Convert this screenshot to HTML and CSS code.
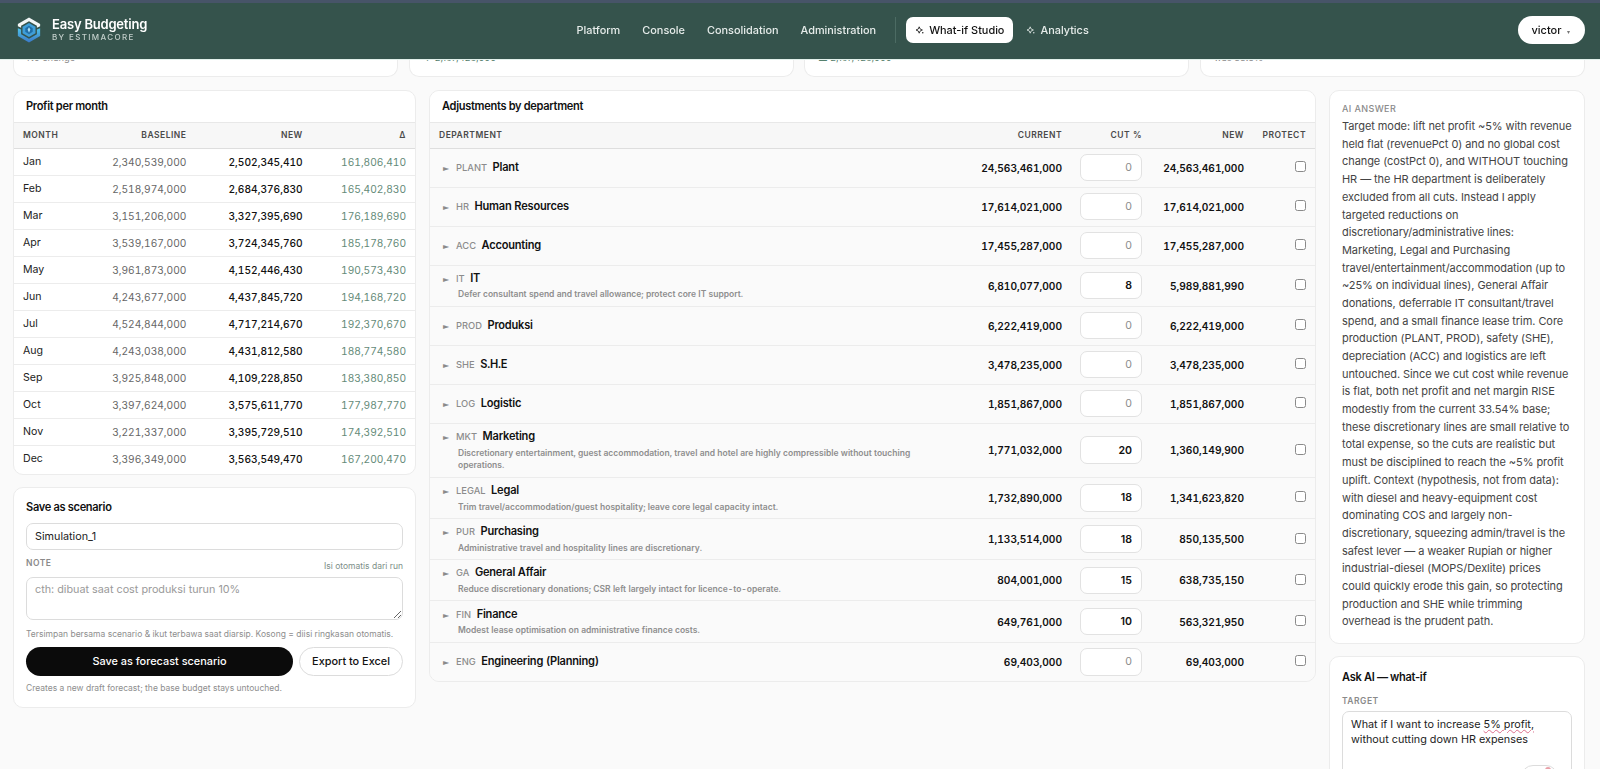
FILE: index.html
```html
<!DOCTYPE html>
<html lang="en">

<head>
    <meta charset="UTF-8">
    <title>Easy Budgeting - What-if Studio</title>
    <link rel="stylesheet" href="styles.css">
</head>

<body>
    <header class="topbar">
        <div class="brand">
            <svg class="brand-logo" width="26" height="26" viewBox="0 0 28 28">
                <defs>
                    <linearGradient id="logoBlue" x1="0" y1="0" x2="0" y2="1">
                        <stop offset="0" stop-color="#4fc3e8" />
                        <stop offset="1" stop-color="#3a78c8" />
                    </linearGradient>
                </defs>
                <path d="M14 0.500 26 7.500V10L22.500 11.500V9.500L14 4.500 5.500 9.500V11.500L2 10V7.500Z" fill="#f2f6f6" />
                <path d="M2 12 5.500 13.500V18.500L14 23.500 22.500 18.500V13.500L26 12V20.500L14 27.500 2 20.500Z" fill="url(#logoBlue)" />
                <path d="M14 6.500 21 10.500V17.500L14 21.500 7 17.500V10.500Z" fill="#3f9ed8" />
                <path d="M14 9.500 18 12V16L14 18.500 10 16V12Z" fill="#1f6ea8" />
                <path d="M14 11 15.500 13.500 14 17 12.500 13.500Z" fill="#a9dcf2" />
            </svg>
            <div>
                <div class="brand-name">Easy Budgeting</div>
                <div class="brand-sub">BY ESTIMACORE</div>
            </div>
        </div>
        <nav class="nav">
            <a class="nav-link">Platform</a>
            <a class="nav-link">Console</a>
            <a class="nav-link">Consolidation</a>
            <a class="nav-link">Administration</a>
            <span class="nav-sep"></span>
            <a class="nav-link nav-active">
                <svg class="spark" width="8" height="8" viewBox="0 0 10 10"><path d="M4 1 5.200 3.800 8 5 5.200 6.200 4 9 2.800 6.200 0 5 2.800 3.800Z" fill="none" stroke="currentColor" stroke-width="1" /><circle cx="8.500" cy="8.500" r="0.900" fill="currentColor" /></svg>What-if Studio
            </a>
            <a class="nav-link nav-ai">
                <svg class="spark" width="8" height="8" viewBox="0 0 10 10"><path d="M4 1 5.200 3.800 8 5 5.200 6.200 4 9 2.800 6.200 0 5 2.800 3.800Z" fill="none" stroke="currentColor" stroke-width="1" /><circle cx="8.500" cy="8.500" r="0.900" fill="currentColor" /></svg>Analytics
            </a>
        </nav>
        <button class="user-btn">victor <span class="user-caret">▾</span></button>
    </header>

    <main class="page">
        <section class="kpi-row">
            <div class="kpi-card"><span class="kpi-foot">No change</span></div>
            <div class="kpi-card"><span class="kpi-foot kpi-green">▼ 2,167,428,000</span></div>
            <div class="kpi-card"><span class="kpi-foot kpi-green">▲ 2,167,428,000</span></div>
            <div class="kpi-card"><span class="kpi-foot">was 33.5%</span></div>
        </section>

        <section class="studio">
            <div class="col">
                <div class="panel month-panel">
                    <div class="panel-title">Profit per month</div>
                    <table class="grid month-grid">
                        <thead>
                            <tr><th class="left">Month</th><th>Baseline</th><th>New</th><th>Δ</th></tr>
                        </thead>
                        <tbody>
                            <tr><td class="left">Jan</td><td class="muted">2,340,539,000</td><td class="strong">2,502,345,410</td><td class="delta">161,806,410</td></tr>
                            <tr><td class="left">Feb</td><td class="muted">2,518,974,000</td><td class="strong">2,684,376,830</td><td class="delta">165,402,830</td></tr>
                            <tr><td class="left">Mar</td><td class="muted">3,151,206,000</td><td class="strong">3,327,395,690</td><td class="delta">176,189,690</td></tr>
                            <tr><td class="left">Apr</td><td class="muted">3,539,167,000</td><td class="strong">3,724,345,760</td><td class="delta">185,178,760</td></tr>
                            <tr><td class="left">May</td><td class="muted">3,961,873,000</td><td class="strong">4,152,446,430</td><td class="delta">190,573,430</td></tr>
                            <tr><td class="left">Jun</td><td class="muted">4,243,677,000</td><td class="strong">4,437,845,720</td><td class="delta">194,168,720</td></tr>
                            <tr><td class="left">Jul</td><td class="muted">4,524,844,000</td><td class="strong">4,717,214,670</td><td class="delta">192,370,670</td></tr>
                            <tr><td class="left">Aug</td><td class="muted">4,243,038,000</td><td class="strong">4,431,812,580</td><td class="delta">188,774,580</td></tr>
                            <tr><td class="left">Sep</td><td class="muted">3,925,848,000</td><td class="strong">4,109,228,850</td><td class="delta">183,380,850</td></tr>
                            <tr><td class="left">Oct</td><td class="muted">3,397,624,000</td><td class="strong">3,575,611,770</td><td class="delta">177,987,770</td></tr>
                            <tr><td class="left">Nov</td><td class="muted">3,221,337,000</td><td class="strong">3,395,729,510</td><td class="delta">174,392,510</td></tr>
                            <tr><td class="left">Dec</td><td class="muted">3,396,349,000</td><td class="strong">3,563,549,470</td><td class="delta">167,200,470</td></tr>
                        </tbody>
                    </table>
                </div>

                <div class="panel save-card">
                    <div class="card-title">Save as scenario</div>
                    <input type="text" class="form-input" value="Simulation_1">
                    <div class="note-row">
                        <span class="field-label">Note</span>
                        <span class="note-auto">Isi otomatis dari run</span>
                    </div>
                    <textarea class="form-area" placeholder="cth: dibuat saat cost produksi turun 10%"></textarea>
                    <div class="help help-first">Tersimpan bersama scenario &amp; ikut terbawa saat diarsip. Kosong = diisi ringkasan otomatis.</div>
                    <div class="save-actions">
                        <button class="btn-dark">Save as forecast scenario</button>
                        <button class="btn-light">Export to Excel</button>
                    </div>
                    <div class="help">Creates a new draft forecast; the base budget stays untouched.</div>
                </div>
            </div>

            <div class="panel dept-panel">
                <div class="panel-title">Adjustments by department</div>
                <table class="grid dept-grid">
                    <thead>
                        <tr><th class="left">Department</th><th>Current</th><th>Cut %</th><th>New</th><th>Protect</th></tr>
                    </thead>
                    <tbody>
                        <tr>
                            <td class="left"><span class="tri">►</span><span class="code">PLANT</span><span class="dname">Plant</span></td>
                            <td class="num">24,563,461,000</td><td><input class="cut" value="0"></td><td class="num">24,563,461,000</td><td><input type="checkbox" class="chk"></td>
                        </tr>
                        <tr>
                            <td class="left"><span class="tri">►</span><span class="code">HR</span><span class="dname">Human Resources</span></td>
                            <td class="num">17,614,021,000</td><td><input class="cut" value="0"></td><td class="num">17,614,021,000</td><td><input type="checkbox" class="chk"></td>
                        </tr>
                        <tr>
                            <td class="left"><span class="tri">►</span><span class="code">ACC</span><span class="dname">Accounting</span></td>
                            <td class="num">17,455,287,000</td><td><input class="cut" value="0"></td><td class="num">17,455,287,000</td><td><input type="checkbox" class="chk"></td>
                        </tr>
                        <tr>
                            <td class="left with-reason"><span class="tri">►</span><span class="code">IT</span><span class="dname">IT</span><div class="reason">Defer consultant spend and travel allowance; protect core IT support.</div></td>
                            <td class="num">6,810,077,000</td><td><input class="cut cut-set" value="8"></td><td class="num">5,989,881,990</td><td><input type="checkbox" class="chk"></td>
                        </tr>
                        <tr>
                            <td class="left"><span class="tri">►</span><span class="code">PROD</span><span class="dname">Produksi</span></td>
                            <td class="num">6,222,419,000</td><td><input class="cut" value="0"></td><td class="num">6,222,419,000</td><td><input type="checkbox" class="chk"></td>
                        </tr>
                        <tr>
                            <td class="left"><span class="tri">►</span><span class="code">SHE</span><span class="dname">S.H.E</span></td>
                            <td class="num">3,478,235,000</td><td><input class="cut" value="0"></td><td class="num">3,478,235,000</td><td><input type="checkbox" class="chk"></td>
                        </tr>
                        <tr>
                            <td class="left"><span class="tri">►</span><span class="code">LOG</span><span class="dname">Logistic</span></td>
                            <td class="num">1,851,867,000</td><td><input class="cut" value="0"></td><td class="num">1,851,867,000</td><td><input type="checkbox" class="chk"></td>
                        </tr>
                        <tr>
                            <td class="left with-reason"><span class="tri">►</span><span class="code">MKT</span><span class="dname">Marketing</span><div class="reason">Discretionary entertainment, guest accommodation, travel and hotel are highly compressible without touching operations.</div></td>
                            <td class="num">1,771,032,000</td><td><input class="cut cut-set" value="20"></td><td class="num">1,360,149,900</td><td><input type="checkbox" class="chk"></td>
                        </tr>
                        <tr>
                            <td class="left with-reason"><span class="tri">►</span><span class="code">LEGAL</span><span class="dname">Legal</span><div class="reason">Trim travel/accommodation/guest hospitality; leave core legal capacity intact.</div></td>
                            <td class="num">1,732,890,000</td><td><input class="cut cut-set" value="18"></td><td class="num">1,341,623,820</td><td><input type="checkbox" class="chk"></td>
                        </tr>
                        <tr>
                            <td class="left with-reason"><span class="tri">►</span><span class="code">PUR</span><span class="dname">Purchasing</span><div class="reason">Administrative travel and hospitality lines are discretionary.</div></td>
                            <td class="num">1,133,514,000</td><td><input class="cut cut-set" value="18"></td><td class="num">850,135,500</td><td><input type="checkbox" class="chk"></td>
                        </tr>
                        <tr>
                            <td class="left with-reason"><span class="tri">►</span><span class="code">GA</span><span class="dname">General Affair</span><div class="reason">Reduce discretionary donations; CSR left largely intact for licence-to-operate.</div></td>
                            <td class="num">804,001,000</td><td><input class="cut cut-set" value="15"></td><td class="num">638,735,150</td><td><input type="checkbox" class="chk"></td>
                        </tr>
                        <tr>
                            <td class="left with-reason"><span class="tri">►</span><span class="code">FIN</span><span class="dname">Finance</span><div class="reason">Modest lease optimisation on administrative finance costs.</div></td>
                            <td class="num">649,761,000</td><td><input class="cut cut-set" value="10"></td><td class="num">563,321,950</td><td><input type="checkbox" class="chk"></td>
                        </tr>
                        <tr>
                            <td class="left"><span class="tri">►</span><span class="code">ENG</span><span class="dname">Engineering (Planning)</span></td>
                            <td class="num">69,403,000</td><td><input class="cut" value="0"></td><td class="num">69,403,000</td><td><input type="checkbox" class="chk"></td>
                        </tr>
                    </tbody>
                </table>
            </div>

            <div class="col">
                <div class="panel answer-card">
                    <div class="answer-label">AI ANSWER</div>
                    <p class="answer-text">Target mode: lift net profit ~5% with revenue held flat (revenuePct 0) and no global cost change (costPct 0), and WITHOUT touching HR — the HR department is deliberately excluded from all cuts. Instead I apply targeted reductions on discretionary/administrative lines:<br>Marketing, Legal and Purchasing travel/entertainment/accommodation (up to ~25% on individual lines), General Affair donations, deferrable IT consultant/travel spend, and a small finance lease trim. Core production (PLANT, PROD), safety (SHE), depreciation (ACC) and logistics are left untouched. Since we cut cost while revenue is flat, both net profit and net margin RISE modestly from the current 33.54% base; these discretionary lines are small relative to total expense, so the cuts are realistic but must be disciplined to reach the ~5% profit uplift. Context (hypothesis, not from data): with diesel and heavy-equipment cost dominating COS and largely non-discretionary, squeezing admin/travel is the safest lever — a weaker Rupiah or higher industrial-diesel (MOPS/Dexlite) prices<br>could quickly erode this gain, so protecting production and SHE while trimming overhead is the prudent path.</p>
                </div>
                <div class="panel ask-card">
                    <div class="card-title">Ask AI — what-if</div>
                    <div class="field-label">Target</div>
                    <div class="ask-box">
                        What if I want to increase <span class="spell">5% profit,</span> without cutting down HR expenses
                        <span class="ask-send"><span class="ask-dot"></span></span>
                    </div>
                </div>
            </div>
        </section>
    </main>
</body>

</html>
```

FILE: styles.css
```css
* {
    box-sizing: border-box;
}

html,
body {
    height: 769px;
    margin: 0;
    overflow: hidden;
}

body {
    background-color: #fafafa;
    color: #111;
    font-family: Inter, "Liberation Sans", sans-serif;
    font-size: 11px;
}

/* top bar sits over the scrolled page */
.topbar {
    position: fixed;
    top: 0;
    left: 0;
    right: 0;
    z-index: 10;
    height: 59px;
    display: flex;
    align-items: center;
    padding: 0 15.500px 1.500px 16px;
    background-color: #35534c;
    border-top: 3px solid #475468;
    box-shadow: 0 1px 0 #e2f0eb;
}

.brand {
    flex: none;
    display: flex;
    align-items: center;
    gap: 10px;
    width: 300px;
}

.brand-logo {
    flex: none;
}

.brand-name {
    color: #fff;
    font-size: 13px;
    font-weight: 600;
    letter-spacing: -0.2px;
    line-height: 15px;
}

.brand-sub {
    color: #c3cfcb;
    font-size: 8px;
    font-weight: 500;
    letter-spacing: 1.350px;
    line-height: 11px;
}

.nav {
    display: flex;
    align-items: center;
    gap: 6px;
    margin-left: 252.500px;
}

.nav-link {
    display: flex;
    align-items: center;
    height: 26px;
    padding: 0 8px;
    border-radius: 7px;
    color: #e6ecea;
    font-size: 10.900px;
    font-weight: 500;
}

.nav-sep {
    width: 1px;
    height: 26px;
    margin: 0 4px 0 5px;
    background-color: #4c6b63;
}

.nav-active {
    padding: 0 9px 0 10px;
    background-color: #fff;
    color: #111;
}

.spark {
    flex: none;
    margin-right: 5px;
}

.user-btn {
    width: 67px;
    height: 28px;
    margin-left: auto;
    border: none;
    border-radius: 14px;
    background-color: #fff;
    color: #111;
    font-family: inherit;
    font-size: 11px;
    font-weight: 500;
}

.user-caret {
    margin-left: 3px;
    color: #777;
    font-size: 6px;
}

.page {
    padding: 0 15px 0 13px;
}

.kpi-row {
    display: grid;
    grid-template-columns: repeat(4, 1fr);
    gap: 10.500px;
    height: 76.500px;
}

.kpi-card {
    display: flex;
    align-items: flex-end;
    padding: 0 13px 11.500px 13px;
    background-color: #fff;
    border: 1px solid #ececec;
    border-top: none;
    border-radius: 0 0 10px 10px;
}

.kpi-foot {
    color: #8a8a8a;
    font-size: 9.350px;
    line-height: 12px;
}

.kpi-green {
    color: #55806c;
}

.studio {
    display: grid;
    grid-template-columns: 403px 887px 256px;
    column-gap: 13px;
    align-items: start;
    margin-top: 13px;
}

.col {
    display: flex;
    flex-direction: column;
    gap: 12px;
}

.panel {
    background-color: #fff;
    border: 1px solid #ececec;
    border-radius: 10px;
    overflow: hidden;
}

.panel-title {
    height: 31px;
    padding: 0 12px;
    font-size: 11.050px;
    font-weight: 600;
    letter-spacing: -0.3px;
    line-height: 31px;
}

.grid {
    width: 100%;
    border-collapse: collapse;
    table-layout: fixed;
    font-variant-numeric: tabular-nums;
}

.grid th {
    height: 26px;
    padding: 0 9px;
    background-color: #f7f7f7;
    border-top: 1px solid #e8e8e8;
    border-bottom: 1px solid #dedede;
    color: #4a4a4a;
    font-size: 8.500px;
    font-weight: 600;
    letter-spacing: 0.5px;
    text-align: right;
    text-transform: uppercase;
}

.grid td {
    padding: 0 9px;
    border-bottom: 1px solid #ececec;
    text-align: right;
}

.grid .left {
    text-align: left;
}

.month-panel {
    padding-bottom: 2px;
}

.month-grid td {
    height: 27px;
    font-size: 10.200px;
    color: #222;
}

.month-grid td.left {
    font-size: 10.600px;
}

.month-grid tr:last-child td {
    border-bottom: none;
}

.month-grid .muted {
    color: #666;
}

.month-grid .strong {
    color: #111;
    font-weight: 500;
}

.month-grid .delta {
    color: #648a78;
}

.month-grid th:nth-child(1) {
    width: 70px;
}

.month-grid th:nth-child(2) {
    width: 111px;
}

.month-grid th:nth-child(3) {
    width: 116px;
}

.month-grid th:nth-child(4) {
    width: 103px;
}

.dept-panel {
    background-color: #fafafa;
}

.dept-panel .panel-title {
    background-color: #fff;
}

.dept-grid td {
    height: 39px;
    background-color: #fafafa;
}

.dept-grid tr:last-child td {
    border-bottom: none;
}

.dept-grid th:nth-child(2) {
    width: 100px;
}

.dept-grid th:nth-child(3) {
    width: 80px;
}

.dept-grid th:nth-child(4) {
    width: 102px;
}

.dept-grid th:nth-child(5) {
    width: 62px;
}

.dept-grid td.left {
    padding-left: 13px;
    padding-right: 41px;
    line-height: 15px;
}

.dept-grid td.with-reason {
    padding-top: 5.300px;
}

.tri {
    display: inline-block;
    width: 13px;
    color: #8a8a8a;
    font-family: "DejaVu Sans", sans-serif;
    font-size: 8px;
    line-height: 0;
}

.code {
    margin-right: 5.500px;
    color: #8c8c8c;
    font-size: 9.350px;
    font-weight: 500;
}

.dname {
    color: #111;
    font-size: 11.050px;
    font-weight: 600;
    letter-spacing: -0.2px;
}

.reason {
    margin: 2.500px 0 4.700px 15px;
    color: #8e8e8e;
    font-size: 8.500px;
    font-weight: 600;
    line-height: 12.750px;
}

.num {
    color: #111;
    font-size: 10.200px;
    font-weight: 600;
}

.cut {
    display: block;
    width: 62px;
    height: 27.500px;
    margin-left: auto;
    padding: 0 9px;
    background-color: #fff;
    border: 1px solid #e2e2e2;
    border-radius: 7px;
    color: #8c8c8c;
    font-family: inherit;
    font-size: 10.600px;
    text-align: right;
}

.cut-set {
    color: #111;
    font-weight: 600;
}

.chk {
    appearance: none;
    width: 11px;
    height: 11px;
    margin: 0 0 3px 0;
    background-color: #fff;
    border: 1px solid #8a8a8a;
    border-radius: 2.500px;
    vertical-align: middle;
}

.save-card {
    padding: 12px 12px 12.500px 12px;
}

.card-title {
    margin-bottom: 8px;
    font-size: 11.050px;
    font-weight: 600;
    letter-spacing: -0.3px;
    line-height: 15px;
}

.form-input {
    display: block;
    width: 100%;
    height: 27px;
    padding: 0 8px;
    border: 1px solid #dcdcdc;
    border-radius: 7px;
    color: #222;
    font-family: inherit;
    font-size: 10.800px;
}

.note-row {
    display: flex;
    justify-content: space-between;
    margin: 6.700px 0 5.600px 0;
}

.field-label {
    color: #8a8a8a;
    font-size: 8.500px;
    font-weight: 600;
    letter-spacing: 0.5px;
    line-height: 12px;
    text-transform: uppercase;
}

.note-auto {
    margin-top: 3px;
    color: #7d8f89;
    font-size: 8.500px;
    line-height: 12px;
}

.form-area {
    display: block;
    width: 100%;
    height: 42.500px;
    padding: 5px 8px;
    border: 1px solid #dcdcdc;
    border-radius: 7px;
    font-family: inherit;
    font-size: 10.800px;
}

.form-area::placeholder {
    color: #9a9a9a;
}

.help {
    margin-top: 6.600px;
    color: #8e8e8e;
    font-size: 8.500px;
    line-height: 12px;
}

.help-first {
    margin-top: 8.600px;
}

.save-actions {
    display: flex;
    gap: 6px;
    margin-top: 6.400px;
}

.btn-dark {
    flex: 1;
    height: 29px;
    background-color: #0b0b0b;
    border: none;
    border-radius: 15px;
    color: #fff;
    font-family: inherit;
    font-size: 10.900px;
    font-weight: 500;
}

.btn-light {
    width: 104px;
    height: 29px;
    background-color: #fff;
    border: 1px solid #dcdcdc;
    border-radius: 15px;
    color: #111;
    font-family: inherit;
    font-size: 10.900px;
    font-weight: 500;
}

.answer-card {
    padding: 12px 11px 11.500px 12px;
}

.answer-label {
    color: #8a8a8a;
    font-size: 9px;
    font-weight: 500;
    letter-spacing: 0.4px;
    line-height: 12px;
}

.answer-text {
    margin: 3.600px 0 0 0;
    color: #444;
    font-size: 11px;
    letter-spacing: -0.07px;
    line-height: 17.680px;
}

.ask-card {
    height: 200px;
    padding: 13px 12px;
}

.ask-card .card-title {
    margin-bottom: 10px;
}

.ask-box {
    position: relative;
    height: 120px;
    margin-top: 4.500px;
    padding: 5px 8px;
    border: 1px solid #dcdcdc;
    border-radius: 7px;
    color: #222;
    font-size: 10.800px;
    line-height: 15.300px;
}

.spell {
    text-decoration: underline wavy #dc6f8c 1px;
}

/* send button lies over the bottom of the box */
.ask-send {
    position: absolute;
    top: 53px;
    right: 13px;
    width: 37px;
    height: 24px;
    background-color: #fff;
    border: 1px solid #dcdcdc;
    border-radius: 12px;
}

.ask-dot {
    position: absolute;
    top: 1px;
    right: 6px;
    width: 6px;
    height: 6px;
    background-color: #e8a0a8;
    border-radius: 50%;
}
```
